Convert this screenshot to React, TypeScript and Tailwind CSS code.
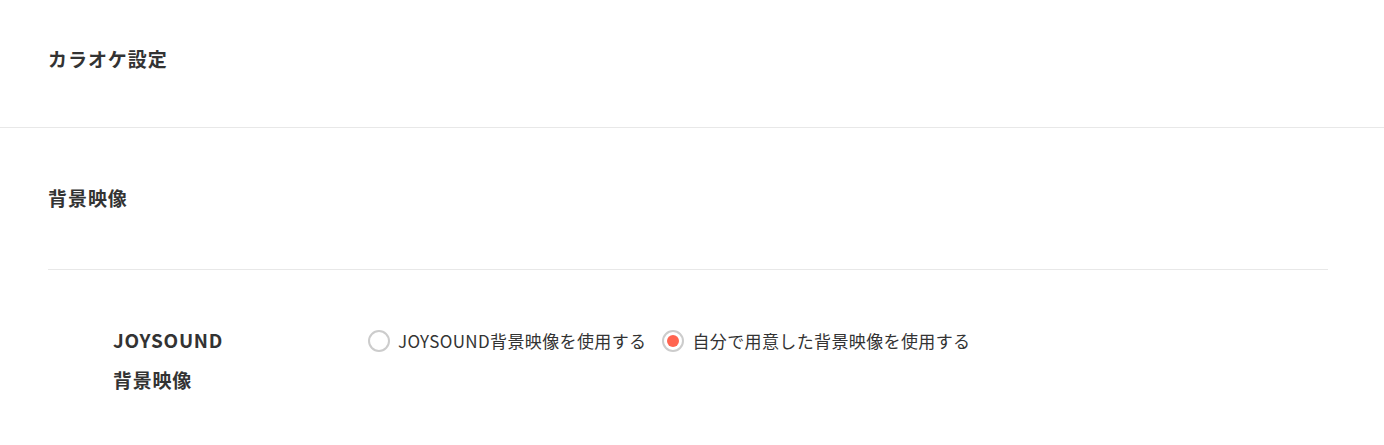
import { useState } from 'react'

function Radio({ checked, label, onSelect }: { checked: boolean; label: string; onSelect: () => void }) {
    return (
        <label className="flex items-center gap-2 cursor-pointer" onClick={onSelect}>
            <span className="w-[22px] h-[22px] rounded-full border-2 border-[#cccccc] flex items-center justify-center bg-white">
                {checked && <span className="w-[12px] h-[12px] rounded-full bg-[#ff6450]" />}
            </span>
            <span className="text-[17px] text-[#333333] leading-10 tracking-[0.022em]">{label}</span>
        </label>
    )
}

export default function App() {
    const [mode, setMode] = useState<'joysound' | 'custom'>('custom')

    return (
        <div className="bg-white w-full min-h-[445px] text-[#333333]" style={{ fontFamily: '"Noto Sans CJK JP", "Noto Sans", sans-serif' }}>
            <div className="h-[128px] flex items-center px-12 pb-2 border-b border-[#e8e8e8]">
                <h1 className="text-[19px] font-bold tracking-[0.05em]">カラオケ設定</h1>
            </div>

            <div className="pl-12 pr-14">
                <div className="h-[142px] flex items-center border-b border-[#e8e8e8]">
                    <h2 className="text-[19px] font-bold tracking-[0.05em]">背景映像</h2>
                </div>

                <div className="flex pt-[50px] pl-[65px]">
                    <div className="w-[255px] text-[19px] font-bold leading-10 tracking-[0.04em]">
                        <div>JOYSOUND</div>
                        <div>背景映像</div>
                    </div>
                    <div className="flex items-center gap-4 h-10 mt-px">
                        <Radio checked={mode === 'joysound'} label="JOYSOUND背景映像を使用する" onSelect={() => setMode('joysound')} />
                        <Radio checked={mode === 'custom'} label="自分で用意した背景映像を使用する" onSelect={() => setMode('custom')} />
                    </div>
                </div>
            </div>
        </div>
    )
}
